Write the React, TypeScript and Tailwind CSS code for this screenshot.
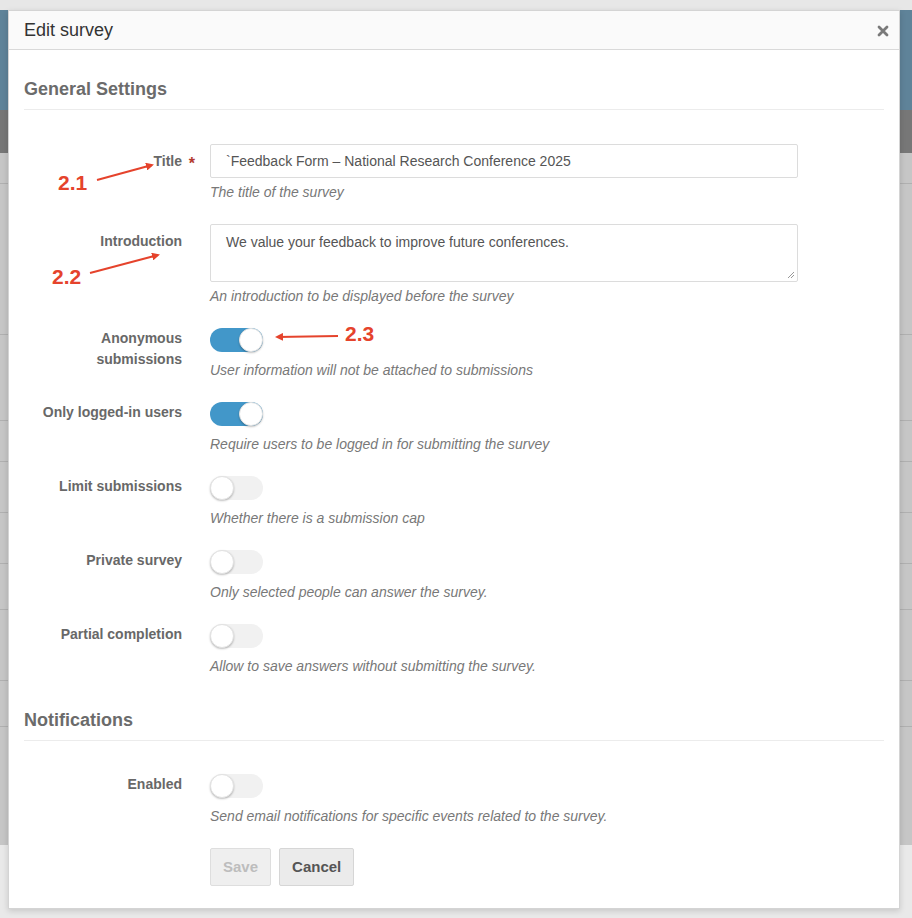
import React from "react";

const ROWS = [
  { label: ["Anonymous", "submissions"], on: true, help: "User information will not be attached to submissions" },
  { label: ["Only logged-in users"], on: true, help: "Require users to be logged in for submitting the survey" },
  { label: ["Limit submissions"], on: false, help: "Whether there is a submission cap" },
  { label: ["Private survey"], on: false, help: "Only selected people can answer the survey." },
  { label: ["Partial completion"], on: false, help: "Allow to save answers without submitting the survey." },
];

function Toggle({ on }: { on: boolean }) {
  return (
    <div
      className={
        "relative h-[24px] w-[53px] rounded-full " +
        (on ? "bg-[#4297c9]" : "bg-[#f1f1f1]")
      }
    >
      <div
        className={
          "absolute top-0 h-[24px] w-[24px] rounded-full bg-white border border-[#e2e2e2] shadow-[0_1px_2px_rgba(0,0,0,0.25)] " +
          (on ? "right-0" : "left-0")
        }
      />
    </div>
  );
}

function Row({
  label,
  children,
  help,
  labelPad = "pt-[7px]",
  helpGap = "mt-[4px]",
  required = false,
  className = "",
}: {
  label: string[];
  children: React.ReactNode;
  help: string;
  labelPad?: string;
  helpGap?: string;
  required?: boolean;
  className?: string;
}) {
  return (
    <div className={"flex " + className}>
      <div className={"w-[158px] shrink-0 text-right text-[14px] font-bold leading-[21px] text-[#686868] " + labelPad}>
        <span className="relative">
          {label.map((l) => (
            <div key={l}>{l}</div>
          ))}
          {required && (
            <span className="absolute -right-[13px] top-[2px] text-[16px] text-[#b33a2e]">*</span>
          )}
        </span>
      </div>
      <div className="ml-[28px] w-[588px]">
        {children}
        <div className={"text-[14px] italic leading-[20px] text-[#787878] " + helpGap}>{help}</div>
      </div>
    </div>
  );
}

function Section({ title, className = "" }: { title: string; className?: string }) {
  return (
    <div className={"border-b border-[#ececec] pb-[10px] text-[18px] font-bold leading-[20px] text-[#6b6b6b] " + className}>
      {title}
    </div>
  );
}

export default function App() {
  return (
    <div className="relative h-[918px] w-[912px] overflow-hidden font-['Liberation_Sans',Arial,sans-serif]">
      {/* dimmed page behind the dialog */}
      <div className="flex h-full flex-col">
        <div className="h-[10px] bg-[#e7e7e7]" />
        <div className="h-[100px] bg-[#5f8399]" />
        <div className="h-[43px] bg-[#777777]" />
        <div className="flex h-[692px] flex-col bg-[#c6c6c6]">
          <div className="mt-[30px] border-b border-[#b0b0b0]" />
          <div className="mt-[150px] border-b border-[#b0b0b0]" />
          <div className="mt-[85px] border-b border-[#b0b0b0]" />
          <div className="mt-[40px] border-b border-[#b0b0b0]" />
          <div className="mt-[50px] border-b border-[#b0b0b0]" />
          <div className="mt-[50px] border-b border-[#b0b0b0]" />
          <div className="mt-[45px] border-b border-[#b0b0b0]" />
          <div className="mt-[70px] border-b border-[#b0b0b0]" />
          <div className="mt-[45px] border-b border-[#b0b0b0]" />
        </div>
        <div className="flex-1 bg-[#e9e9e9]" />
      </div>

      {/* dialog */}
      <div className="absolute left-[8px] top-[10px] w-[892px] border border-[#d4d4d4] bg-white shadow-[0_2px_6px_rgba(0,0,0,0.15)]">
        <div className="flex h-[39px] items-center justify-between border-b border-[#d9d9d9] bg-[#fafafa] pl-[15px] pr-[10px]">
          <span className="text-[18px] leading-[20px] text-[#333]">Edit survey</span>
          <svg width="12" height="12" viewBox="0 0 12 12" className="mt-[2px]">
            <path d="M2 2 L10 10 M10 2 L2 10" stroke="#7a7a7a" strokeWidth="2.8" strokeLinecap="round" />
          </svg>
        </div>

        <div className="px-[15px] pb-[22px]">
          <Section title="General Settings" className="mt-[29px]" />

          <Row label={["Title"]} help="The title of the survey" required className="mt-[34px]">
            <div className="flex h-[34px] items-center rounded-[2px] border border-[#dcdcdc] px-[15px] text-[14px] text-[#555]">
              `Feedback Form – National Research Conference 2025
            </div>
          </Row>

          <Row label={["Introduction"]} help="An introduction to be displayed before the survey" className="mt-[22px]">
            <div className="relative h-[58px] rounded-[2px] border border-[#dcdcdc] px-[15px] pt-[8px] text-[14px] leading-[18px] text-[#555]">
              We value your feedback to improve future conferences.
              <svg width="8" height="8" viewBox="0 0 8 8" className="absolute bottom-[2px] right-[2px]">
                <path d="M1 7 L7 1 M4 7 L7 4" stroke="#999" strokeWidth="1" />
              </svg>
            </div>
          </Row>

          {ROWS.map((r) => (
            <Row key={r.help} label={r.label} help={r.help} labelPad="pt-0" helpGap="mt-[8px]" className="mt-[22px]">
              <Toggle on={r.on} />
            </Row>
          ))}

          <Section title="Notifications" className="mt-[34px]" />

          <Row
            label={["Enabled"]}
            help="Send email notifications for specific events related to the survey."
            labelPad="pt-0"
            helpGap="mt-[8px]"
            className="mt-[33px]"
          >
            <Toggle on={false} />
          </Row>

          <div className="ml-[186px] mt-[22px] flex gap-[8px]">
            <button className="h-[38px] rounded-[2px] border border-[#dedede] bg-[#efefef] px-[12px] text-[15px] font-bold text-[#bdbdbd]">
              Save
            </button>
            <button className="h-[38px] rounded-[2px] border border-[#d6d6d6] bg-[#ebebeb] px-[12px] text-[15px] font-bold text-[#555]">
              Cancel
            </button>
          </div>
        </div>
      </div>

      {/* red annotations */}
      <svg className="absolute left-0 top-0" width="912" height="918" viewBox="0 0 912 918">
        <defs>
          <marker id="ah" markerWidth="8" markerHeight="8" refX="6" refY="4" orient="auto" markerUnits="userSpaceOnUse">
            <path d="M0 0 L8 4 L0 8 Z" fill="#e5432c" />
          </marker>
        </defs>
        <line x1="97" y1="180" x2="152" y2="165" stroke="#e5432c" strokeWidth="2" markerEnd="url(#ah)" />
        <line x1="90" y1="273" x2="158" y2="255" stroke="#e5432c" strokeWidth="2" markerEnd="url(#ah)" />
        <line x1="338" y1="336" x2="277" y2="337" stroke="#e5432c" strokeWidth="2" markerEnd="url(#ah)" />
      </svg>
      <span className="absolute left-[58px] top-[171px] text-[21px] font-bold leading-[24px] text-[#e5432c]">2.1</span>
      <span className="absolute left-[52px] top-[265px] text-[21px] font-bold leading-[24px] text-[#e5432c]">2.2</span>
      <span className="absolute left-[345px] top-[322px] text-[21px] font-bold leading-[24px] text-[#e5432c]">2.3</span>
    </div>
  );
}
